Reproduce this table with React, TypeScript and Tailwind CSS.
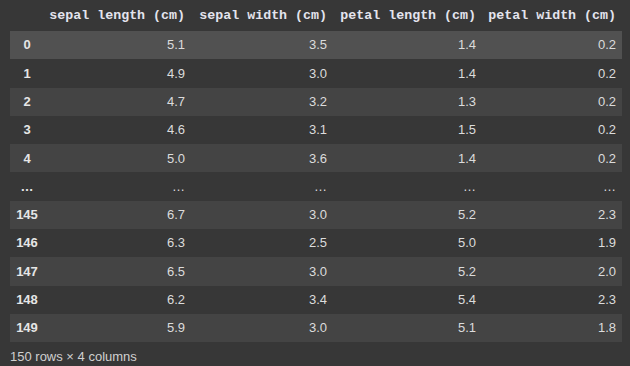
import React from "react";

const rows: [string, string, string, string, string][] = [
  ["0", "5.1", "3.5", "1.4", "0.2"],
  ["1", "4.9", "3.0", "1.4", "0.2"],
  ["2", "4.7", "3.2", "1.3", "0.2"],
  ["3", "4.6", "3.1", "1.5", "0.2"],
  ["4", "5.0", "3.6", "1.4", "0.2"],
  ["...", "...", "...", "...", "..."],
  ["145", "6.7", "3.0", "5.2", "2.3"],
  ["146", "6.3", "2.5", "5.0", "1.9"],
  ["147", "6.5", "3.0", "5.2", "2.0"],
  ["148", "6.2", "3.4", "5.4", "2.3"],
  ["149", "5.9", "3.0", "5.1", "1.8"],
];

const headers = ["sepal length (cm)", "sepal width (cm)", "petal length (cm)", "petal width (cm)"];

export default function App() {
  return (
    <div className="w-[630px] h-[366px] bg-[#373737] overflow-hidden" style={{ fontFamily: '"Liberation Sans", Arial, sans-serif' }}>
      <div className="ml-[10px] w-[612px]">
        <div className="grid grid-cols-[34px_147px_142px_149px_140px] h-[31px] items-center">
          <div />
          {headers.map((h) => (
            <div
              key={h}
              className="text-right pr-[6px] text-[13.3px] font-bold text-[#e4e4ee] whitespace-pre"
              style={{ fontFamily: '"Liberation Mono", "DejaVu Sans Mono", monospace' }}
            >
              {h}
            </div>
          ))}
        </div>
        {rows.map((r, i) => {
          const bg = i === 0 ? "bg-[#515151]" : i % 2 === 0 ? "bg-[#444444]" : "bg-[#373737]";
          return (
            <div key={i} className={`grid grid-cols-[34px_147px_142px_149px_140px] h-[28.3px] items-center ${bg}`}>
              <div className="text-center text-[13px] font-bold text-[#e6e6e6]">{r[0] === "..." ? "…" : r[0]}</div>
              {r.slice(1).map((c, j) => (
                <div key={j} className="text-right pr-[6px] text-[13px] text-[#dcdcdc]">
                  {c === "..." ? "…" : c}
                </div>
              ))}
            </div>
          );
        })}
        <div className="mt-[5px] text-[13px] text-[#d0d0d0]">150 rows × 4 columns</div>
      </div>
    </div>
  );
}
